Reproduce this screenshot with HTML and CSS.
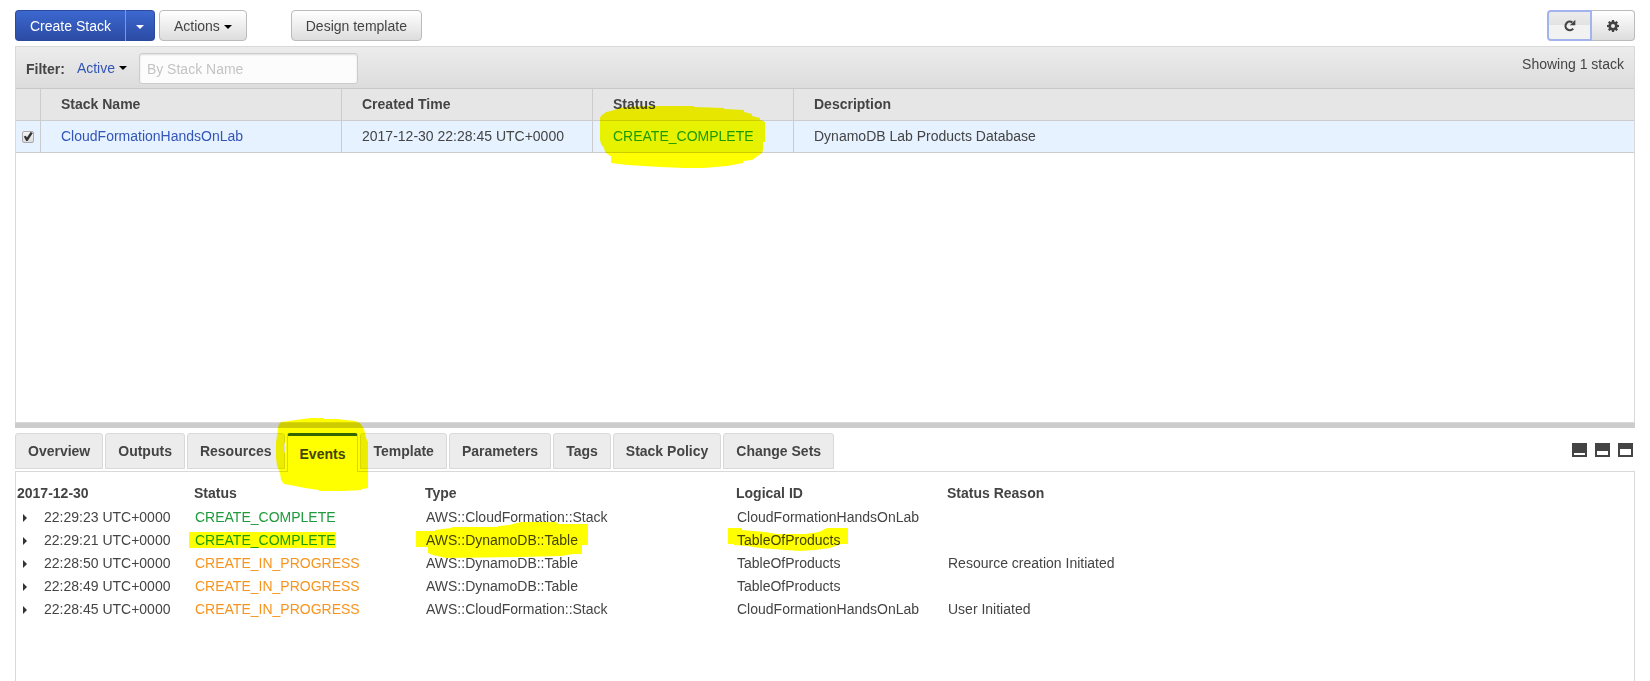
FILE: index.html
```html
<!DOCTYPE html>
<html lang="en">
<head>
<meta charset="utf-8">
<title>CloudFormation Stacks</title>
<link rel="stylesheet" href="styles.css">
</head>
<body>
<div class="page">
  <header class="toolbar">
    <div class="split">
      <button type="button" class="btn primary split-main">Create Stack</button><button type="button" class="btn primary split-toggle" aria-label="More create options"><span class="caret"></span></button>
    </div>
    <button type="button" class="btn actions">Actions <span class="caret"></span></button>
    <button type="button" class="btn">Design template</button>
    <div class="tools">
      <button type="button" class="btn tool refresh" aria-label="Refresh">
        <svg width="13" height="13" viewBox="0 0 13 13"><path d="M9.300 3.400A4.300 4.300 0 1 0 10.200 9.600" fill="none" stroke="#444" stroke-width="2.200"/><path d="M12.300 .8v5.400H6.900z" fill="#444"/></svg>
      </button>
      <button type="button" class="btn tool gear" aria-label="Settings">
        <svg width="12" height="12" viewBox="0 0 12 12"><path fill="#444" fill-rule="evenodd" d="M5 0h2l.3 1.6 1 .4L9.600 1 11 2.400 10 3.700l.4 1L12 5v2l-1.600.3-.4 1 1 1.300L9.600 11l-1.300-1-1 .4L7 12H5l-.3-1.600-1-.4L2.400 11 1 9.600l1-1.300-.4-1L0 7V5l1.600-.3.4-1L1 2.400 2.400 1l1.300 1 1-.4zM6 4a2 2 0 1 0 0 4 2 2 0 0 0 0-4z"/></svg>
      </button>
    </div>
  </header>

  <section class="stacks">
    <form class="filter">
      <label class="filter-label" for="state">Filter:</label>
      <span class="state"><select id="state"><option>Active</option></select><span class="caret"></span></span>
      <input class="search" type="text" placeholder="By Stack Name" aria-label="Stack name">
      <span class="count">Showing 1 stack</span>
    </form>
    <table class="stack-table">
      <colgroup><col class="c-check"><col class="c-name"><col class="c-time"><col class="c-status"><col></colgroup>
      <thead>
        <tr><th></th><th>Stack Name</th><th>Created Time</th><th>Status</th><th>Description</th></tr>
      </thead>
      <tbody>
        <tr>
          <td class="check"><input type="checkbox" checked aria-label="Select CloudFormationHandsOnLab"></td>
          <td><a href="#stack">CloudFormationHandsOnLab</a></td>
          <td>2017-12-30 22:28:45 UTC+0000</td>
          <td class="marked"><span class="done">CREATE_COMPLETE</span>
            <svg class="mark mark-status" width="165" height="62" viewBox="0 0 165 62"><path d="M0 12L1 10 6 6 11 5 20 2 28 1 45 0H94V1L124 2V3L144 4V6L152 8V10L160 12V14L164 15V16H165V36H163V44L162 47L152 54 143 55V57L127 60 115 61 104 62H84L60 61 28 59 11 57V50H10L5 46 4 42 1 38 0 34Z"/></svg>
          </td>
          <td>DynamoDB Lab Products Database</td>
        </tr>
      </tbody>
    </table>
  </section>

  <div class="splitter"></div>

  <nav class="tabbar">
    <button type="button" class="tab">Overview</button>
    <button type="button" class="tab">Outputs</button>
    <button type="button" class="tab">Resources</button>
    <button type="button" class="tab active">Events
      <svg class="mark mark-tab" width="93" height="73" viewBox="0 0 93 73"><path fill-rule="evenodd" d="M3 6L5 4 13 3 27 1 35 0H48V1L61 1 79 3 84 5 88 11 90 20 92 24V70L86 71V72L67 73H43V72L29 70 14 67 8 66 5 62 4 55 1 48 0 40V24L1 18 2 10ZM10 21L8 27V33L10 37 9 29 10 27Z"/></svg>
    </button>
    <button type="button" class="tab">Template</button>
    <button type="button" class="tab">Parameters</button>
    <button type="button" class="tab">Tags</button>
    <button type="button" class="tab">Stack Policy</button>
    <button type="button" class="tab">Change Sets</button>
    <div class="panes">
      <button type="button" class="pane" aria-label="Small detail pane"><svg width="15" height="14" viewBox="0 0 15 14"><path fill="#444" d="M0 0h15v14H0z"/><path fill="#fff" d="M2 10h11v2H2z"/></svg></button>
      <button type="button" class="pane" aria-label="Medium detail pane"><svg width="15" height="14" viewBox="0 0 15 14"><path fill="#444" d="M0 0h15v14H0z"/><path fill="#fff" d="M2 8h11v4H2z"/></svg></button>
      <button type="button" class="pane" aria-label="Large detail pane"><svg width="15" height="14" viewBox="0 0 15 14"><path fill="#444" d="M0 0h15v14H0z"/><path fill="#fff" d="M2 6h11v6H2z"/></svg></button>
    </div>
  </nav>

  <section class="details">
    <table class="events">
      <colgroup><col class="e-time"><col class="e-status"><col class="e-type"><col class="e-id"><col></colgroup>
      <thead>
        <tr><th>2017-12-30</th><th>Status</th><th>Type</th><th>Logical ID</th><th>Status Reason</th></tr>
      </thead>
      <tbody>
        <tr><td><button type="button" class="expand" aria-label="Expand"></button>22:29:23 UTC+0000</td><td class="done">CREATE_COMPLETE</td><td>AWS::CloudFormation::Stack</td><td>CloudFormationHandsOnLab</td><td></td></tr>
        <tr>
          <td><button type="button" class="expand" aria-label="Expand"></button>22:29:21 UTC+0000</td>
          <td class="done marked">CREATE_COMPLETE<svg class="mark mark-event" width="147" height="16" viewBox="0 0 147 16"><path d="M0 0H147V16H0Z"/></svg></td>
          <td class="marked">AWS::DynamoDB::Table<svg class="mark mark-type" width="172" height="36" viewBox="0 0 172 36"><path d="M0 9H19V8L35 6 37 5H81L83 4 93 3 105 0H140L143 2H172V23H166V32H157L145 34 104 35 30 36 17 33 12 31V25H0Z"/></svg></td>
          <td class="marked">TableOfProducts<svg class="mark mark-id" width="120" height="23" viewBox="0 0 120 23"><path d="M0 0H14V2L37 4 49 6H77L91 4 99 0H120V16H113L108 18 102 20 87 22 72 23 58 22 32 20 19 18 6 17V16H0Z"/></svg></td>
          <td></td>
        </tr>
        <tr><td><button type="button" class="expand" aria-label="Expand"></button>22:28:50 UTC+0000</td><td class="progress">CREATE_IN_PROGRESS</td><td>AWS::DynamoDB::Table</td><td>TableOfProducts</td><td>Resource creation Initiated</td></tr>
        <tr><td><button type="button" class="expand" aria-label="Expand"></button>22:28:49 UTC+0000</td><td class="progress">CREATE_IN_PROGRESS</td><td>AWS::DynamoDB::Table</td><td>TableOfProducts</td><td></td></tr>
        <tr><td><button type="button" class="expand" aria-label="Expand"></button>22:28:45 UTC+0000</td><td class="progress">CREATE_IN_PROGRESS</td><td>AWS::CloudFormation::Stack</td><td>CloudFormationHandsOnLab</td><td>User Initiated</td></tr>
      </tbody>
    </table>
  </section>
</div>
</body>
</html>
```
FILE: styles.css
```css
* { box-sizing: border-box; }

body {
  margin: 0;
  background: #fff;
  color: #444;
  font: 14px/20px "Liberation Sans", Arial, sans-serif;
}

button, input, select { font: inherit; color: inherit; }
button { cursor: pointer; }
svg { display: block; }

.page {
  display: flex;
  flex-direction: column;
  min-height: 100vh;
  padding: 0 15px;
}

/* Toolbar */
.toolbar {
  display: flex;
  padding: 10px 0 5px;
}

.btn {
  height: 31px;
  padding: 0 14px;
  border: 1px solid #bbb;
  border-radius: 4px;
  background: linear-gradient(#fff, #ddd);
  white-space: nowrap;
}

.split { display: flex; margin-right: 4px; }
.primary {
  border-color: #2a4a9e;
  background: linear-gradient(#3c68cf, #2c4ba5);
  color: #fff;
}
.split-main { border-right: 0; border-radius: 4px 0 0 4px; }
.split-toggle {
  padding: 0 10px;
  border-left-color: #7d97dc;
  border-radius: 0 4px 4px 0;
}
.actions { margin-right: 44px; }

.caret {
  display: inline-block;
  border: 4px solid transparent;
  border-top-color: #000;
  border-bottom: 0;
  vertical-align: middle;
}
.primary .caret { border-top-color: #fff; }

.tools { display: flex; margin-left: auto; }
.tool { padding: 0 15px; }
.refresh {
  padding: 0 14px;
  border: 2px solid #a3b3ee;
  border-radius: 4px 0 0 4px;
  background: linear-gradient(#ececec, #e2e2e2 50%, #f2f2f2 50%);
}
.gear { border-left: 0; border-radius: 0 4px 4px 0; }

/* Stack list */
.stacks {
  flex: 9 1 0;
  border: 1px solid #d9d9d9;
  border-bottom: 0;
}

.filter {
  display: flex;
  align-items: center;
  height: 42px;
  padding: 2px 10px 0;
  border-bottom: 1px solid #c8c8c8;
  background: linear-gradient(#ececec, #dcdcdc);
}
.filter-label { font-weight: bold; margin-right: 12px; }
.state { display: flex; align-items: center; margin-right: 12px; padding-bottom: 2px; color: #3355b8; }
.state select {
  padding: 0 12px 0 0;
  border: 0;
  background: none;
  appearance: none;
}
.state .caret { margin-left: -9px; pointer-events: none; }
.search {
  width: 219px;
  height: 31px;
  padding: 0 7px;
  border: 1px solid #ccc;
  border-radius: 3px;
  background: #fcfcfc;
  box-shadow: inset 0 1px 2px #ddd;
}
.search::placeholder { color: #c4c4c4; }
.count { margin-left: auto; padding-bottom: 10px; }

table { width: 100%; table-layout: fixed; border-spacing: 0; }
th { text-align: left; }

.stack-table th, .stack-table td {
  height: 32px;
  padding: 0 20px 2px;
  border-right: 1px solid #ccc;
  border-bottom: 1px solid #ccc;
}
.stack-table th:last-child, .stack-table td:last-child { border-right: 0; }
.stack-table th { background: #e6e6e6; }
.stack-table td { background: #e6f2ff; }
.stack-table .check { padding: 0 6px; }
.c-check { width: 25px; }
.c-name { width: 301px; }
.c-time { width: 251px; }
.c-status { width: 201px; }

a { color: #3355b8; text-decoration: none; }

.check input {
  display: block;
  width: 12px;
  height: 12px;
  margin: 0;
  border: 1px solid #aaa;
  border-radius: 2px;
  background: linear-gradient(#f4f4f4, #dcdcdc);
  appearance: none;
}
.check input:checked::before {
  content: "";
  display: block;
  height: 10px;
  background: #333;
  clip-path: polygon(8% 50%, 28% 42%, 40% 60%, 76% 4%, 98% 16%, 46% 94%, 32% 94%);
}

.done { color: #1e9b3c; }
.progress { color: #f7941d; }

/* Highlighter strokes laid over the content */
.marked, .active { position: relative; }
.mark {
  position: absolute;
  fill: #ff0;
  mix-blend-mode: multiply;
  pointer-events: none;
}
.mark-status { left: 7px; top: -15px; }
.mark-tab { left: -12px; top: -18px; }
.mark-event { left: -4px; top: 4px; }
.mark-type { left: -8px; top: -6px; }
.mark-id { left: -7px; top: 0; }

.splitter {
  height: 6px;
  border-top: 1px solid #d9d9d9;
  background: #ccc;
}

/* Tabs */
.tabbar {
  display: flex;
  gap: 2px;
  padding-top: 5px;
}
.tab {
  height: 36px;
  margin-bottom: 2px;
  padding: 0 12px;
  border: 1px solid #d9d9d9;
  border-radius: 3px 3px 0 0;
  background: #ececec;
  font-weight: bold;
  white-space: nowrap;
}
.tab.active {
  height: 39px;
  margin-bottom: -1px;
  border-top: 3px solid #336699;
  border-bottom: 0;
  background: #fff;
}
.panes { display: flex; gap: 8px; align-items: flex-start; margin-left: auto; padding: 10px 2px; }
.pane { padding: 0; border: 0; background: none; }

/* Events */
.details {
  flex: 5 1 0;
  border: 1px solid #d9d9d9;
  border-bottom: 0;
}
.events { margin-top: 9px; }
.events th { height: 22px; padding: 0 1px; }
.events td { height: 23px; padding: 0 2px; }
.events thead tr { height: 24px; }
.e-time { width: 177px; }
.e-status { width: 231px; }
.e-type { width: 311px; }
.e-id { width: 211px; }
.expand {
  width: 4px;
  height: 8px;
  margin: 0 17px 0 5px;
  padding: 0;
  border: 0;
  background: #333;
  clip-path: polygon(0 0, 100% 50%, 0 100%);
}
```
